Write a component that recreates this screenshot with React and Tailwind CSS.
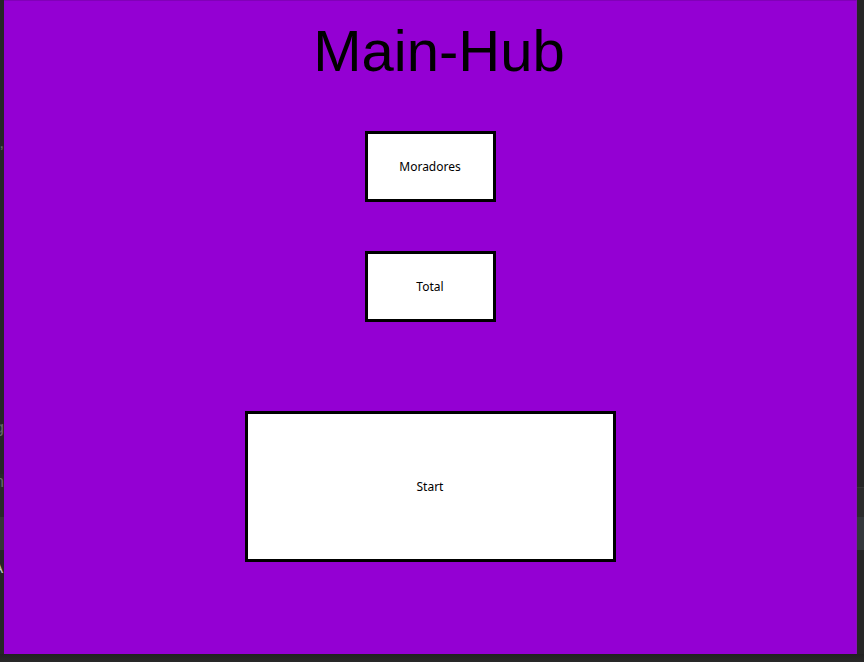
const labelFont = "font-['Noto_Sans','DejaVu_Sans',sans-serif]";

function HubButton({ children, className }) {
  return (
    <button
      type="button"
      className={`border-3 border-black bg-white text-center text-xs text-black ${labelFont} ${className}`}
    >
      {children}
    </button>
  );
}

function LeftEdge() {
  return (
    <div className="flex w-1 shrink-0 flex-col overflow-hidden bg-[#262626] font-['Liberation_Sans',sans-serif] text-base leading-4 text-[#67696b]">
      <div className="flex h-[420px] justify-end pt-[135px]">,</div>
      <div className="flex h-[54px] justify-end">g</div>
      <div className="flex h-[43px] justify-end bg-[#292929]">n</div>
      <div className="h-[33px] bg-[#353535]" />
      <div className="flex grow justify-end pt-2 pr-px text-sm text-[#c8c8c8]">A</div>
    </div>
  );
}

function RightEdge() {
  return (
    <div className="flex w-[7px] shrink-0 flex-col bg-[#262626]">
      <div className="h-[487px]" />
      <div className="h-[30px] border-t border-[#353535] bg-[#2b2c2c]" />
      <div className="h-[33px] bg-[#34383b]" />
    </div>
  );
}

export default function App() {
  return (
    <div className="flex min-h-screen flex-col bg-[#262626]">
      <div className="flex grow">
        <LeftEdge />
        <main className="flex grow flex-col items-center border-t border-r border-t-[#8100b8] border-r-[#8714b8] bg-[#9400d3] pt-4">
          <h1 className="pl-[18px] font-['Liberation_Sans',Arial,sans-serif] text-[58px] leading-[68px] text-black">
            Main-Hub
          </h1>
          <HubButton className="mt-[46px] h-[71px] w-[131px]">Moradores</HubButton>
          <HubButton className="mt-[49px] h-[71px] w-[131px]">Total</HubButton>
          <HubButton className="mt-[89px] h-[151px] w-[371px]">Start</HubButton>
        </main>
        <RightEdge />
      </div>
      <div className="h-2 bg-gradient-to-b from-[#212121] to-[#292929]" />
    </div>
  );
}
